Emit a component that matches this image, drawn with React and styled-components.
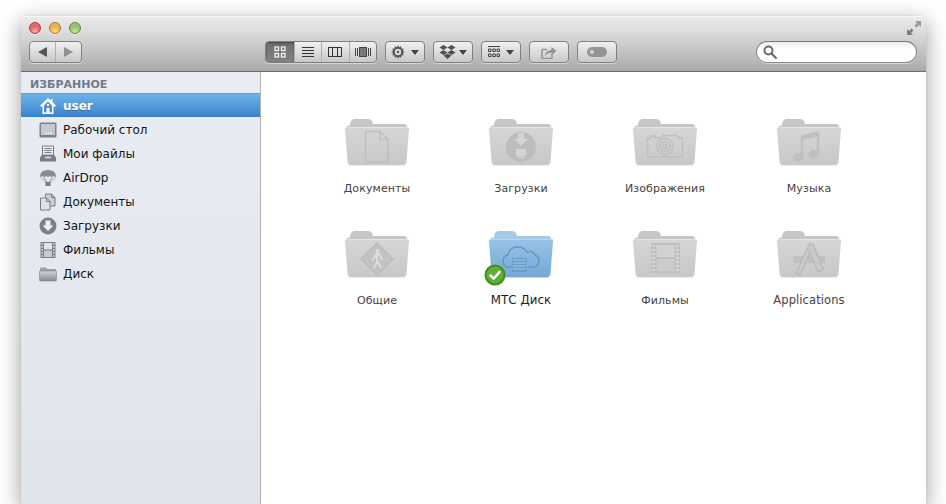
import styled, { createGlobalStyle } from "styled-components"

const GlobalStyle = createGlobalStyle`
  html, body { margin: 0; height: 100%; background: #fff; overflow: hidden; }
  body { font-family: "DejaVu Sans", "Liberation Sans", sans-serif; }
  #root { height: 100%; }
`

const Page = styled.div`
  height: 100%;
  padding: 16px 20px 0 21px;
  box-sizing: border-box;
`

const Window = styled.div`
  height: 100%;
  display: flex;
  flex-direction: column;
  border-radius: 5px 5px 0 0;
  background: #fff;
  box-shadow: 0 6px 22px rgba(0, 0, 0, .4), 0 0 1px rgba(0, 0, 0, .3);
`

const TitleBar = styled.header`
  height: 55px;
  flex: none;
  border-radius: 5px 5px 0 0;
  border-bottom: 1px solid #6d6d6d;
  background: linear-gradient(#ebebeb, #d8d8d8 35%, #aaa);
  box-shadow: inset 0 1px 0 #f6f6f6;
  display: flex;
  flex-direction: column;
`

const TopRow = styled.div`
  height: 25px;
  flex: none;
  padding: 5px 5px 0 8px;
  box-sizing: border-box;
  display: flex;
  justify-content: space-between;
`

const Lights = styled.div`
  display: flex;
  gap: 8px;
  padding-top: 1px;
`

const Light = styled.span`
  width: 12px;
  height: 12px;
  border-radius: 50%;
  box-sizing: border-box;
  border: 1px solid ${(p) => p.$edge};
  background: radial-gradient(circle at 50% 85%, ${(p) => p.$glow}, ${(p) => p.$base} 70%);
  box-shadow: inset 0 2px 1px rgba(255, 255, 255, .25), 0 1px 0 rgba(255, 255, 255, .5);
`

const Toolbar = styled.div`
  height: 22px;
  padding: 0 9px 0 8px;
  display: flex;
  align-items: center;
`

const Group = styled.div`
  display: flex;
  gap: 8px;
  margin-left: 183px;
`

const ButtonBox = styled.div`
  height: 22px;
  box-sizing: border-box;
  width: ${(p) => p.$w}px;
  display: flex;
  align-items: stretch;
  border: 1px solid #808080;
  border-radius: 4px;
  overflow: hidden;
  background: linear-gradient(#f0f0f0, #c9c9c9);
  box-shadow: 0 1px 0 rgba(255, 255, 255, .45);
`

const Segment = styled.div`
  flex: ${(p) => p.$grow || 1};
  display: flex;
  align-items: center;
  justify-content: center;
  gap: ${(p) => p.$gap || 0}px;
  border-left: ${(p) => (p.$first ? "none" : "1px solid #b0b0b0")};
  background: ${(p) => (p.$active ? "linear-gradient(#6e6e6e, #838383)" : "transparent")};
  box-shadow: ${(p) => (p.$active ? "inset 0 1px 2px rgba(0,0,0,.4)" : "none")};
`

const Caret = styled.span`
  width: 0;
  height: 0;
  border-left: 4px solid transparent;
  border-right: 4px solid transparent;
  border-top: 5px solid #444;
`

const SearchBox = styled.div`
  width: 161px;
  height: 22px;
  margin-left: auto;
  box-sizing: border-box;
  padding-left: 6px;
  display: flex;
  align-items: center;
  border: 1px solid #8a8a8a;
  border-top-color: #777;
  border-radius: 11px;
  background: linear-gradient(#ececec, #fff 35%);
  box-shadow: 0 1px 0 rgba(255, 255, 255, .45);
`

const Body = styled.div`
  flex: 1;
  display: flex;
  min-height: 0;
`

const Sidebar = styled.aside`
  width: 239px;
  flex: none;
  border-right: 1px solid #b5b5b5;
  background: linear-gradient(#e9ecf2, #e0e4eb);
`

const SectionTitle = styled.div`
  height: 21px;
  box-sizing: border-box;
  padding: 6px 0 0 9px;
  font-size: 11px;
  line-height: 13px;
  font-weight: bold;
  color: #71798a;
`

const Row = styled.div`
  height: 24px;
  box-sizing: border-box;
  padding-left: 18px;
  margin-bottom: ${(p) => (p.$selected ? "1px" : "0")};
  display: flex;
  align-items: center;
  gap: 6px;
  font-size: 12px;
  color: ${(p) => (p.$selected ? "#fff" : "#111")};
  font-weight: ${(p) => (p.$selected ? "bold" : "normal")};
  background: ${(p) => (p.$selected ? "linear-gradient(#6db3e8, #3a82ce)" : "transparent")};
  border-top: ${(p) => (p.$selected ? "1px solid #5d9fd8" : "none")};
  text-shadow: ${(p) => (p.$selected ? "0 1px 0 rgba(0,0,0,.25)" : "0 1px 0 rgba(255,255,255,.5)")};
`

const Content = styled.main`
  flex: 1;
  padding: 47px 0 0 44px;
  display: grid;
  grid-template-columns: repeat(4, 144px);
  grid-auto-rows: 112px;
  align-content: start;
`

const Tile = styled.div`
  position: relative;
  display: flex;
  flex-direction: column;
  align-items: center;
`

const Label = styled.div`
  margin-top: 14px;
  font-size: ${(p) => p.$size || 11}px;
  line-height: 15px;
  letter-spacing: .1px;
  color: ${(p) => (p.$strong ? "#1c1c1c" : "#434343")};
`

const Badge = styled.div`
  position: absolute;
  left: 35px;
  top: 33px;
  width: 22px;
  height: 22px;
`

const folderTints = {
  gray: { tab: "#c6c6c6", top: "#d6d6d6", bottom: "#c8c8c8", glyph: "#bfbfbf", line: "#e2e2e2", hi: "#e4e4e4" },
  blue: { tab: "#a6cae6", top: "#97c3e6", bottom: "#75a9d3", glyph: "#6299c6", line: "#a9cdea", hi: "#b8d8f0" },
}

const Folder = ({ tint = "gray", children }) => {
  const c = folderTints[tint]
  const id = `folder-${tint}`
  return (
    <svg width="64" height="48" viewBox="0 0 64 48">
      <defs>
        <linearGradient id={id} x1="0" y1="0" x2="0" y2="1">
          <stop offset="0" stopColor={c.top} />
          <stop offset="1" stopColor={c.bottom} />
        </linearGradient>
      </defs>
      <path d="M5 7Q5 0 10 0H23Q27 0 28 5H59Q62 5 62 8V14H2V8Q2 5 5 7Z" fill={c.tab} />
      <path d="M1 8H63Q64 8 64 10L61.5 43Q61 46 58 46H6Q3 46 2.5 43L0 10Q0 8 1 8Z" fill={`url(#${id})`} />
      <path d="M1 8.5H63" stroke={c.hi} strokeWidth="1" />
      <path d="M4 46.5H60" stroke={c.line} strokeWidth="1" opacity=".7" />
      <g fill="none" stroke={c.glyph} strokeWidth="1.5" strokeLinejoin="round" strokeLinecap="round">
        {children}
      </g>
    </svg>
  )
}

const DocGlyph = () => <path d="M20.5 12.5H35L43 20.5V43H20.5ZM35 12.5V20.5H43" />

const DownloadGlyph = () => (
  <>
    <circle cx="32" cy="28" r="15" fill="#bdbdbd" stroke="none" />
    <path d="M29 14H35V20H39L32 27L25 20H29Z" fill="#d4d4d4" stroke="none" />
    <rect x="27" y="30" width="10" height="7" fill="#d4d4d4" stroke="none" />
    <path d="M29 38.5H35" stroke="#d4d4d4" />
  </>
)

const CameraGlyph = () => (
  <>
    <path d="M14.5 19H18V17H22V19H28L30 16.5H44L46 19H49.5V38H14.5Z" />
    <circle cx="32" cy="27.5" r="8" />
    <circle cx="32" cy="27.5" r="5" />
    <circle cx="32" cy="27.5" r="2" />
  </>
)

const MusicGlyph = () => (
  <>
    <path d="M25 37V18L41 14V33" strokeWidth="2.5" />
    <path d="M25 20V17L41 13V17Z" fill="#bfbfbf" />
    <ellipse cx="21" cy="38.5" rx="4.5" ry="3.5" fill="#bfbfbf" />
    <ellipse cx="36.5" cy="35" rx="4.5" ry="3.5" fill="#bfbfbf" />
  </>
)

const SharedGlyph = () => (
  <>
    <path d="M32 12L48 28L32 44L16 28Z" fill="#c2c2c2" stroke="#bcbcbc" />
    <circle cx="32.5" cy="20" r="2" fill="#dcdcdc" stroke="none" />
    <path d="M31 23L34 23L37 28M32 24V31L29 37M32.5 31L36 36M31 24L28 29" stroke="#dcdcdc" strokeWidth="2" />
  </>
)

const CloudGlyph = () => (
  <>
    <path d="M23 36H20Q14 36 14 30Q14 25 19 24Q20 16 29 16Q35 16 38 21Q44 19 46 24Q50 26 50 30Q50 36 44 36H40" />
    <rect x="23" y="27" width="15" height="14" fill="#6299c6" stroke="none" opacity=".8" />
    <path d="M24 29H37M24 32H37M24 35H37M24 38H37" stroke="#a4cbe9" strokeWidth="1" />
  </>
)

const FilmGlyph = () => (
  <>
    <rect x="18" y="12" width="29" height="30" fill="#c0c0c0" stroke="none" />
    <rect x="23.5" y="14" width="18" height="12" fill="#d2d2d2" stroke="none" />
    <rect x="23.5" y="28" width="18" height="12" fill="#cbcbcb" stroke="none" />
    <path d="M19 15H22M19 19H22M19 23H22M19 27H22M19 31H22M19 35H22M19 39H22M43 15H46M43 19H46M43 23H46M43 27H46M43 31H46M43 35H46M43 39H46" stroke="#d6d6d6" strokeWidth="2" strokeLinecap="butt" />
  </>
)

const AppsGlyph = () => (
  <>
    <path d="M16 25H48V32H16Z" fill="#c0c0c0" stroke="none" />
    <path d="M33 12L19 42L23 44L36 15Z" fill="#cacaca" stroke="#bababa" />
    <path d="M32 19L41 41L46 38L36 13" fill="#cacaca" stroke="#bababa" />
  </>
)

const Glyph = styled.svg`
  display: block;
  flex: none;
`

const SideIcon = ({ children }) => (
  <Glyph width="18" height="18" viewBox="0 0 18 18">
    {children}
  </Glyph>
)

const HomeIcon = () => (
  <SideIcon>
    <path d="M9 1L1 8.5L2 10L3.5 9V17H14.5V9L16 10L17 8.5L13.5 5V2H12V3.5Z" fill="#fff" />
    <path d="M5 8.5L9 4.5L13 8.5V15.5H10.5V11H7.5V15.5H5Z" fill="#4a90d6" />
    <rect x="8" y="7" width="2" height="2" fill="#fff" />
    <rect x="8" y="11" width="2" height="5" fill="#fff" />
  </SideIcon>
)

const DesktopIcon = () => (
  <SideIcon>
    <rect x=".5" y="1.5" width="17" height="15" rx="1.5" fill="#7b828e" />
    <rect x="2" y="3" width="14" height="11" fill="#c4c9d2" />
    <path d="M6 12H7.5M8.5 12H10M11 12H12.5" stroke="#f0f2f5" strokeWidth="1.5" />
  </SideIcon>
)

const FilesIcon = () => (
  <SideIcon>
    <path d="M3.5 1H14.5V10H3.5Z" fill="#eceef2" stroke="#767d89" />
    <path d="M5.5 3.5H12.5M5.5 5.5H12.5M5.5 7.5H12.5" stroke="#767d89" />
    <path d="M2.5 10H15.5L17 13V16.5H1V13Z" fill="#767d89" />
    <path d="M6 12.5H12" stroke="#e1e4ea" strokeWidth="1.5" />
  </SideIcon>
)

const AirDropIcon = () => (
  <SideIcon>
    <path d="M1 8Q1 1 9 1Q17 1 17 8Q14.5 6.5 13 8Q11 6.5 9 8Q7 6.5 5 8Q3 6.5 1 8Z" fill="#868d98" />
    <path d="M1.5 8L7 13.5M5 8L8 13.5M13 8L10 13.5M16.5 8L11 13.5" stroke="#868d98" strokeWidth=".8" fill="none" />
    <rect x="6.5" y="13" width="5" height="4" fill="#767d89" />
  </SideIcon>
)

const DocsIcon = () => (
  <SideIcon>
    <path d="M6.5 1H12.5L16 4.5V13H6.5Z" fill="#c9cdd5" stroke="#767d89" />
    <path d="M12.5 1V4.5H16" fill="none" stroke="#767d89" />
    <path d="M1.5 5H7.5L11 8.5V17H1.5Z" fill="#dfe2e8" stroke="#767d89" />
    <path d="M7.5 5V8.5H11" fill="none" stroke="#767d89" />
  </SideIcon>
)

const DownIcon = () => (
  <SideIcon>
    <circle cx="9" cy="9" r="8.5" fill="#7a818d" />
    <path d="M6.5 3.5H11.5V8.5H14.5L9 14L3.5 8.5H6.5Z" fill="#eef0f4" />
  </SideIcon>
)

const MoviesIcon = () => (
  <SideIcon>
    <rect x="1.5" y="1" width="15" height="16" fill="#767d89" />
    <rect x="5" y="2" width="8" height="6.5" fill="#dfe2e8" />
    <rect x="5" y="9.5" width="8" height="6.5" fill="#c6cad2" />
    <path d="M2.5 3H4M2.5 6H4M2.5 9H4M2.5 12H4M2.5 15H4M14 3H15.5M14 6H15.5M14 9H15.5M14 12H15.5M14 15H15.5" stroke="#e1e4ea" strokeWidth="1.3" />
  </SideIcon>
)

const DiskIcon = () => (
  <SideIcon>
    <defs>
      <linearGradient id="side-folder" x1="0" y1="0" x2="0" y2="1">
        <stop offset="0" stopColor="#cdd1d9" />
        <stop offset="1" stopColor="#838a96" />
      </linearGradient>
    </defs>
    <path d="M1 5V3.5Q1 2.5 2 2.5H7L8 4H16Q17 4 17 5V6H1Z" fill="#9aa0aa" />
    <path d="M.5 6H17.5V15Q17.5 16 16.5 16H1.5Q.5 16 .5 15Z" fill="url(#side-folder)" stroke="#767d89" strokeWidth=".5" />
  </SideIcon>
)

const tools = "#333"

const GridIcon = () => (
  <Glyph width="12" height="12" viewBox="0 0 12 12" fill="none" stroke="#f0f0f0" strokeWidth="1.3">
    <rect x="1" y="1" width="3.5" height="3.5" />
    <rect x="7.5" y="1" width="3.5" height="3.5" />
    <rect x="1" y="7.5" width="3.5" height="3.5" />
    <rect x="7.5" y="7.5" width="3.5" height="3.5" />
  </Glyph>
)

const ListIcon = () => (
  <Glyph width="12" height="12" viewBox="0 0 12 12" stroke={tools}>
    <path d="M0 1.5H12M0 4.5H12M0 7.5H12M0 10.5H12" />
  </Glyph>
)

const ColumnsIcon = () => (
  <Glyph width="14" height="10" viewBox="0 0 14 10" fill="none" stroke={tools}>
    <rect x=".5" y=".5" width="13" height="9" />
    <path d="M4.5 0V10M9.5 0V10" />
  </Glyph>
)

const FlowIcon = () => (
  <Glyph width="16" height="10" viewBox="0 0 16 10" stroke="#444" fill="none">
    <path d="M.5 1V9M2.5 1V9" />
    <rect x="4.5" y=".5" width="7" height="9" fill="#777" />
    <path d="M13.5 1V9M15.5 1V9" />
  </Glyph>
)

const GearIcon = () => (
  <Glyph width="14" height="14" viewBox="0 0 14 14">
    <path d="M7 0L8 2.2L10.2 1.3L10.4 3.6L12.7 3.8L11.8 6L14 7L11.8 8L12.7 10.2L10.4 10.4L10.2 12.7L8 11.8L7 14L6 11.8L3.8 12.7L3.6 10.4L1.3 10.2L2.2 8L0 7L2.2 6L1.3 3.8L3.6 3.6L3.8 1.3L6 2.2Z" fill="#555" />
    <circle cx="7" cy="7" r="3.2" fill="#dadada" />
    <circle cx="7" cy="7" r="1.2" fill="#555" />
  </Glyph>
)

const DropboxIcon = () => (
  <Glyph width="17" height="14" viewBox="0 0 16 14" fill="#505050">
    <path d="M4 0L8 2.5L4 5L0 2.5ZM12 0L16 2.5L12 5L8 2.5ZM4 5L8 7.5L4 10L0 7.5ZM12 5L16 7.5L12 10L8 7.5ZM4 10.5L8 8.5L12 10.5L8 14Z" />
  </Glyph>
)

const ArrangeIcon = () => (
  <Glyph width="12" height="12" viewBox="0 0 12 12" fill="none" stroke={tools} strokeWidth=".9">
    <path d="M0 .5H12" />
    <path d="M.5 3H3V5.5H.5ZM4.8 3H7.3V5.5H4.8ZM9 3H11.5V5.5H9ZM.5 8H3V10.5H.5ZM4.8 8H7.3V10.5H4.8ZM9 8H11.5V10.5H9Z" />
  </Glyph>
)

const ShareIcon = () => (
  <Glyph width="16" height="14" viewBox="0 0 16 14" fill="none">
    <path d="M1 4.5H6M1 4V13.5H11V9" stroke="#949494" strokeWidth="1.5" />
    <path d="M4 11Q4.5 5.5 10.5 5V2L15.5 6L10.5 10V7.5Q6.5 7.5 4 11Z" fill="#929292" />
  </Glyph>
)

const TagIcon = () => (
  <Glyph width="20" height="10" viewBox="0 0 20 10">
    <rect x="0" y="0" width="20" height="10" rx="5" fill="#959595" />
    <circle cx="5" cy="5" r="2" fill="#d4d4d4" />
  </Glyph>
)

const SearchIcon = () => (
  <Glyph width="14" height="14" viewBox="0 0 14 14" fill="none" stroke="#6a6a6a" strokeWidth="2">
    <circle cx="5.5" cy="5.5" r="4" />
    <path d="M8.5 8.5L13 13" strokeLinecap="round" />
  </Glyph>
)

const ExpandIcon = () => (
  <Glyph width="14" height="14" viewBox="0 0 14 14" fill="#7e7e7e">
    <path d="M8 0H14V6L12 4L9.5 6.5L7.5 4.5L10 2Z" fill="#9a9a9a" />
    <path d="M6 14H0V8L2 10L4.5 7.5L6.5 9.5L4 12Z" />
  </Glyph>
)

const places = [
  { name: "user", Icon: HomeIcon, selected: true },
  { name: "Рабочий стол", Icon: DesktopIcon },
  { name: "Мои файлы", Icon: FilesIcon },
  { name: "AirDrop", Icon: AirDropIcon },
  { name: "Документы", Icon: DocsIcon },
  { name: "Загрузки", Icon: DownIcon },
  { name: "Фильмы", Icon: MoviesIcon },
  { name: "Диск", Icon: DiskIcon },
]

const folders = [
  { name: "Документы", Icon: DocGlyph },
  { name: "Загрузки", Icon: DownloadGlyph },
  { name: "Изображения", Icon: CameraGlyph },
  { name: "Музыка", Icon: MusicGlyph },
  { name: "Общие", Icon: SharedGlyph },
  { name: "МТС Диск", Icon: CloudGlyph, tint: "blue", synced: true, size: 11.8 },
  { name: "Фильмы", Icon: FilmGlyph },
  { name: "Applications", Icon: AppsGlyph, size: 11.5 },
]

export default function App() {
  return (
    <>
      <GlobalStyle />
      <Page>
        <Window>
          <TitleBar>
            <TopRow>
              <Lights>
                <Light $base="#e04a50" $glow="#ffb0b0" $edge="#a8383c" />
                <Light $base="#e2a033" $glow="#ffe08a" $edge="#a87a28" />
                <Light $base="#7fb356" $glow="#c9ec9c" $edge="#5f8a40" />
              </Lights>
              <ExpandIcon />
            </TopRow>
            <Toolbar>
              <ButtonBox $w={53}>
                <Segment $first>
                  <Glyph width="9" height="10" viewBox="0 0 9 10"><path d="M0 5L9 0V10Z" fill="#555" /></Glyph>
                </Segment>
                <Segment>
                  <Glyph width="9" height="10" viewBox="0 0 9 10"><path d="M9 5L0 0V10Z" fill="#909090" /></Glyph>
                </Segment>
              </ButtonBox>
              <Group>
                <ButtonBox $w={112}>
                  <Segment $first $active $grow={1.05}><GridIcon /></Segment>
                  <Segment><ListIcon /></Segment>
                  <Segment><ColumnsIcon /></Segment>
                  <Segment><FlowIcon /></Segment>
                </ButtonBox>
                <ButtonBox $w={40}>
                  <Segment $first $gap={6}><GearIcon /><Caret /></Segment>
                </ButtonBox>
                <ButtonBox $w={40}>
                  <Segment $first $gap={3}><DropboxIcon /><Caret /></Segment>
                </ButtonBox>
                <ButtonBox $w={40}>
                  <Segment $first $gap={6}><ArrangeIcon /><Caret /></Segment>
                </ButtonBox>
                <ButtonBox $w={40}>
                  <Segment $first><ShareIcon /></Segment>
                </ButtonBox>
                <ButtonBox $w={40}>
                  <Segment $first><TagIcon /></Segment>
                </ButtonBox>
              </Group>
              <SearchBox><SearchIcon /></SearchBox>
            </Toolbar>
          </TitleBar>
          <Body>
            <Sidebar>
              <SectionTitle>ИЗБРАННОЕ</SectionTitle>
              {places.map(({ name, Icon, selected }) => (
                <Row key={name} $selected={selected}>
                  <Icon />
                  {name}
                </Row>
              ))}
            </Sidebar>
            <Content>
              {folders.map(({ name, Icon, tint, synced, size }) => (
                <Tile key={name}>
                  <Folder tint={tint}><Icon /></Folder>
                  <Label $strong={synced} $size={size}>{name}</Label>
                  {synced && (
                    <Badge>
                      <svg width="22" height="22" viewBox="0 0 22 22">
                        <circle cx="11" cy="11" r="10.5" fill="#3f8f1f" />
                        <circle cx="11" cy="11" r="8.5" fill="#5fae35" />
                        <path d="M6.5 11.5L9.8 14.5L15.5 8" fill="none" stroke="#fff" strokeWidth="2.6" strokeLinecap="round" strokeLinejoin="round" />
                      </svg>
                    </Badge>
                  )}
                </Tile>
              ))}
            </Content>
          </Body>
        </Window>
      </Page>
    </>
  )
}
